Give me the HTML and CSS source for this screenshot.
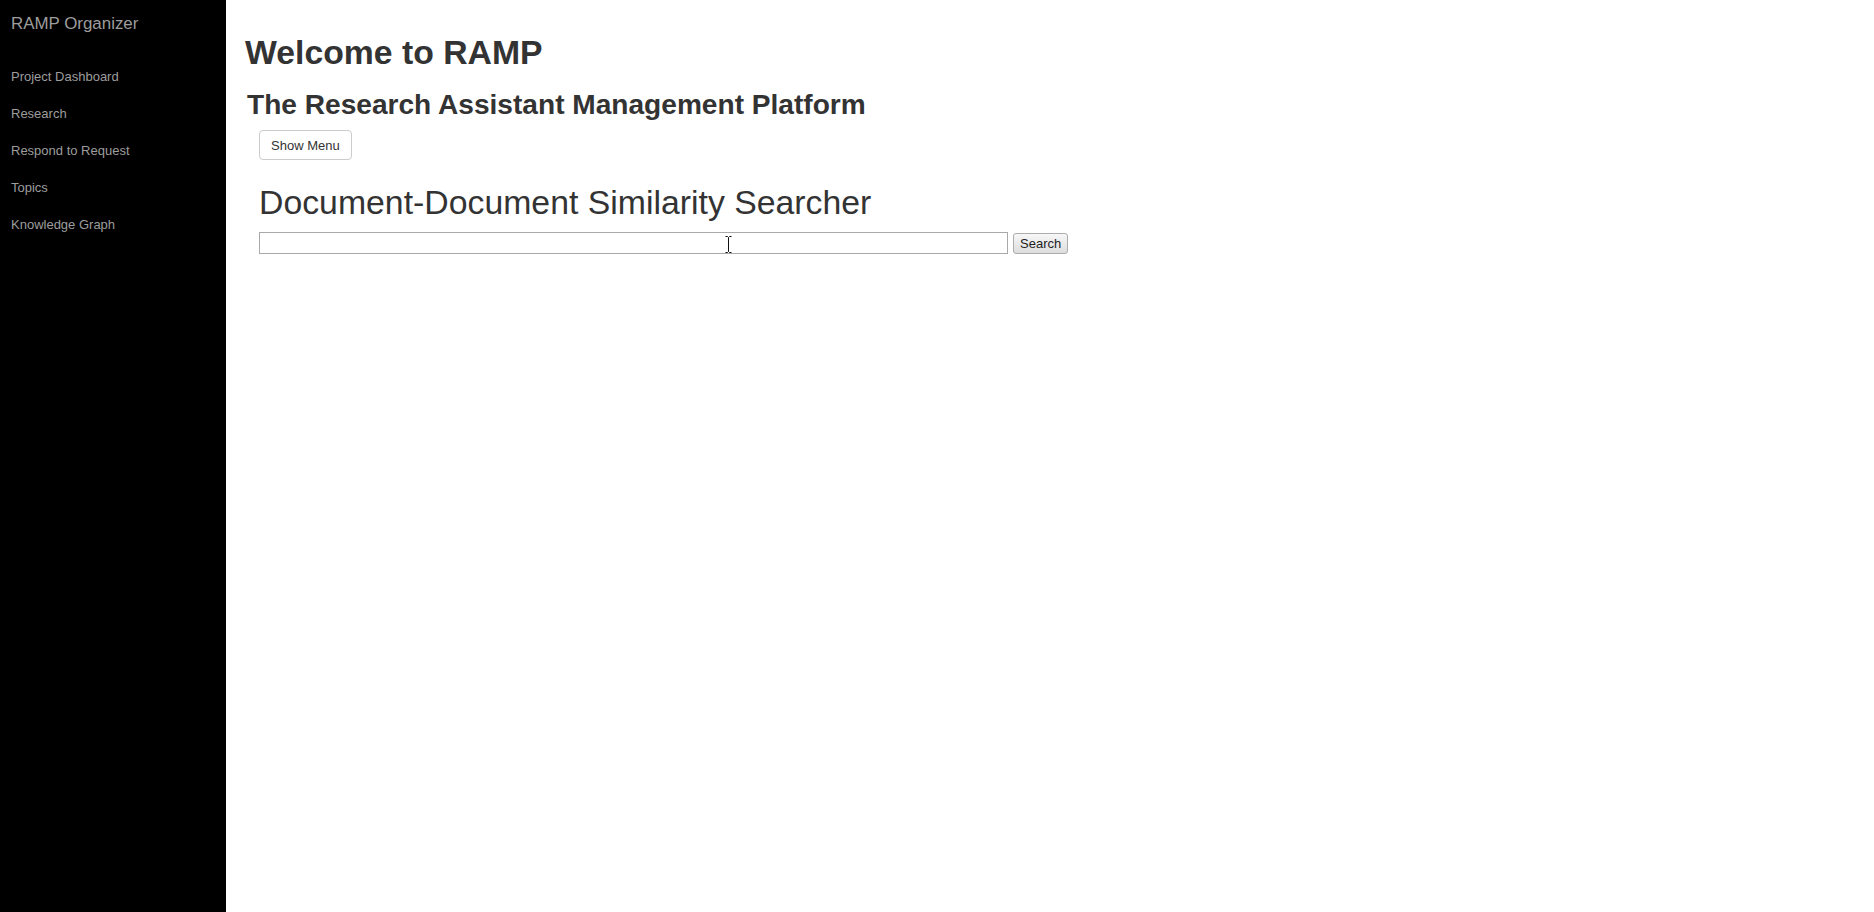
FILE: index.html
```html
<!DOCTYPE html>
<html lang="en">
<head>
<meta charset="utf-8">
<title>RAMP Organizer</title>
<link rel="stylesheet" href="styles.css">
</head>
<body>
<div class="layout">
  <nav class="sidebar">
    <div class="brand">RAMP Organizer</div>
    <ul class="nav">
      <li><a href="#">Project Dashboard</a></li>
      <li><a href="#">Research</a></li>
      <li><a href="#">Respond to Request</a></li>
      <li><a href="#">Topics</a></li>
      <li><a href="#">Knowledge Graph</a></li>
    </ul>
  </nav>
  <main class="main">
    <h1 class="title">Welcome to RAMP</h1>
    <h2 class="subtitle">The Research Assistant Management Platform</h2>
    <button class="btn-menu" type="button">Show Menu</button>
    <section class="searcher">
      <h1 class="searcher-title">Document-Document Similarity Searcher</h1>
      <form class="search-row">
        <input class="search-input" type="text">
        <button class="search-btn" type="button">Search</button>
      </form>
    </section>
  </main>
</div>
<svg class="cursor" width="9" height="17" viewBox="0 0 9 17">
  <path d="M1.5 0.5h2l1 1 1-1h2M4.5 1.5v14M1.5 16.5h2l1-1 1 1h2" fill="none" stroke="#fff" stroke-width="2.2"/>
  <path d="M1.5 0.5h2l1 1 1-1h2M4.5 1.5v14M1.5 16.5h2l1-1 1 1h2" fill="none" stroke="#111" stroke-width="1"/>
</svg>
</body>
</html>
```

FILE: styles.css
```css
html, body {
  margin: 0;
  padding: 0;
  height: 100%;
}

body {
  font-family: "Liberation Sans", Arial, Helvetica, sans-serif;
  font-size: 13px;
  line-height: 1.42857;
  color: #333;
  background: #fff;
}

.layout {
  display: flex;
  min-height: 100vh;
}

.sidebar {
  width: 226px;
  flex: 0 0 226px;
  background: #000;
}

.brand {
  padding: 14px 0 0 11px;
  height: 20px;
  line-height: 20px;
  font-size: 16.9px;
  color: #9d9d9d;
}

.nav {
  list-style: none;
  margin: 24px 0 0 0;
  padding: 0;
}

.nav li a {
  display: block;
  padding: 9.5px 0 9.5px 11px;
  line-height: 18px;
  font-size: 13px;
  color: #9d9d9d;
  text-decoration: none;
}

.main {
  flex: 1;
  padding: 34px 0 0 19px;
}

.title {
  margin: 0;
  font-size: 33.75px;
  line-height: 1.1;
  font-weight: bold;
  color: #333;
}

.subtitle {
  margin: 19px 0 0 2px;
  font-size: 28.1px;
  line-height: 1.1;
  font-weight: bold;
  color: #333;
}

.btn-menu {
  display: block;
  margin: 9px 0 0 14px;
  box-sizing: border-box;
  height: 30px;
  padding: 0 11px;
  font-family: "Liberation Sans", Arial, sans-serif;
  font-size: 13px;
  color: #333;
  background: #fff;
  border: 1px solid #ccc;
  border-radius: 4px;
}

.searcher {
  margin: 24px 0 0 14px;
}

.searcher-title {
  margin: 0;
  font-size: 33.8px;
  line-height: 1.1;
  font-weight: normal;
  color: #333;
}

.search-row {
  display: flex;
  align-items: flex-start;
  gap: 5px;
  margin: 11px 0 0 0;
}

.search-input {
  box-sizing: border-box;
  width: 749px;
  height: 22px;
  margin: 0;
  padding: 1px 2px;
  border: 1px solid #a9a9a9;
  background: #fff;
  font-family: "Liberation Sans", Arial, sans-serif;
  font-size: 13px;
}

.search-btn {
  box-sizing: border-box;
  height: 21px;
  margin: 1px 0 0 0;
  padding: 0 6px;
  font-family: "Liberation Sans", Arial, sans-serif;
  font-size: 13px;
  color: #222;
  background: linear-gradient(#f7f7f7, #dddddd);
  border: 1px solid #acacac;
  border-radius: 3px;
}

.cursor {
  position: absolute;
  left: 724px;
  top: 236px;
}
```
